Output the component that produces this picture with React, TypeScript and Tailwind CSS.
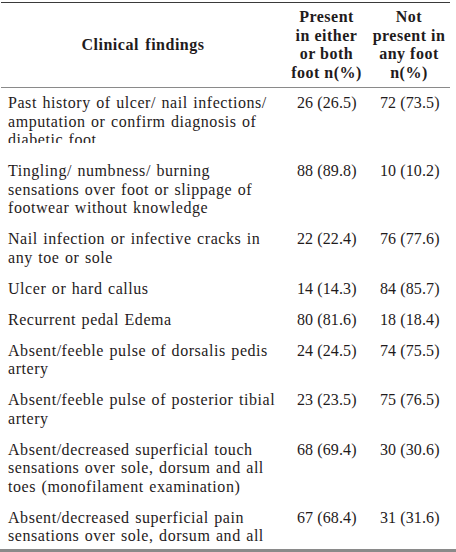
import React from "react";

type Row = {
    finding: string[];
    present: string;
    absent: string;
    clip?: boolean;
};

const rows: Row[] = [
    {
        finding: ["Past history of ulcer/ nail infections/", "amputation or confirm diagnosis of", "diabetic foot"],
        present: "26 (26.5)",
        absent: "72 (73.5)",
        clip: true,
    },
    {
        finding: ["Tingling/ numbness/ burning", "sensations over foot or slippage of", "footwear without knowledge"],
        present: "88 (89.8)",
        absent: "10 (10.2)",
    },
    {
        finding: ["Nail infection or infective cracks in", "any toe or sole"],
        present: "22 (22.4)",
        absent: "76 (77.6)",
    },
    { finding: ["Ulcer or hard callus"], present: "14 (14.3)", absent: "84 (85.7)" },
    { finding: ["Recurrent pedal Edema"], present: "80 (81.6)", absent: "18 (18.4)" },
    {
        finding: ["Absent/feeble pulse of dorsalis pedis", "artery"],
        present: "24 (24.5)",
        absent: "74 (75.5)",
    },
    {
        finding: ["Absent/feeble pulse of posterior tibial", "artery"],
        present: "23 (23.5)",
        absent: "75 (76.5)",
    },
    {
        finding: ["Absent/decreased superficial touch", "sensations over sole, dorsum and all", "toes (monofilament examination)"],
        present: "68 (69.4)",
        absent: "30 (30.6)",
    },
    {
        finding: ["Absent/decreased superficial pain", "sensations over sole, dorsum and all", "toes"],
        present: "67 (68.4)",
        absent: "31 (31.6)",
    },
];

const cols = "grid grid-cols-[284px_83px_82px]";

export default function App() {
    return (
        <div
            className="h-[552px] w-[456px] flex flex-col bg-white text-[#1f1b1c] text-[16px] leading-[18.5px]"
            style={{ fontFamily: '"Liberation Serif", serif' }}
        >
            <div className="flex-1 overflow-hidden pt-[2px] pl-[1px]">
                <div className="w-[449px] border-t-[1.5px] border-[#3a3a3a]">
                    {/* header */}
                    <div className={`${cols} border-b-[1.5px] border-[#8a8a8a] font-bold py-[5px] tracking-[0.5px]`}>
                        <div className="flex items-center justify-center [word-spacing:2px]">Clinical findings</div>
                        <div className="text-center whitespace-nowrap">
                            Present
                            <br />
                            in either
                            <br />
                            or both
                            <br />
                            foot n(%)
                        </div>
                        <div className="text-center whitespace-nowrap">
                            Not
                            <br />
                            present in
                            <br />
                            any foot
                            <br />
                            n(%)
                        </div>
                    </div>

                    {rows.map((row) => (
                        <div key={row.present} className={`${cols} pt-[6px] pb-[6.5px]`}>
                            <div className="pl-[7px] tracking-[0.55px] [word-spacing:1px] whitespace-nowrap">
                                {row.clip ? (
                                    <div className="h-[55.5px]">
                                        <div className="h-[49px] overflow-hidden">
                                            {row.finding.map((line) => (
                                                <div key={line}>{line}</div>
                                            ))}
                                        </div>
                                    </div>
                                ) : (
                                    row.finding.map((line) => <div key={line}>{line}</div>)
                                )}
                            </div>
                            <div className="pl-[12px] whitespace-nowrap tracking-[0.1px]">{row.present}</div>
                            <div className="pl-[12px] whitespace-nowrap tracking-[0.1px]">{row.absent}</div>
                        </div>
                    ))}
                </div>
            </div>
            <div className="h-[3px] bg-[#8a8a8a]" />
        </div>
    );
}
